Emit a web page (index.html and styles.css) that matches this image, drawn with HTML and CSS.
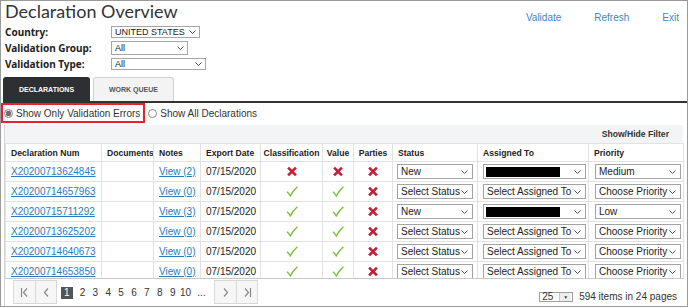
FILE: index.html
```html
<!DOCTYPE html>
<html lang="en">
<head>
  <meta charset="UTF-8" />
  <title>Declaration Overview</title>
  <link rel="stylesheet" href="styles.css">
</head>
<body>
  <svg class="defs" width="0" height="0">
    <symbol id="chev" viewBox="0 0 7 4"><path d="M.5.5 3.5 3.5 6.5.5" fill="none" stroke="#555" stroke-width="1"/></symbol>
    <symbol id="cross" viewBox="0 0 11 11"><path d="M1.6 1.6l7.8 7.8M9.4 1.6l-7.8 7.8" stroke="#c3203a" stroke-width="2.7"/></symbol>
    <symbol id="tick" viewBox="0 0 13 12"><path d="M1 6.2C2.4 7.4 3.6 8.8 4.6 10.8 6.6 7 9 3.8 12.4.8" fill="none" stroke="#78bf3e" stroke-width="1.5"/></symbol>
  </svg>

  <div class="frame">
    <header class="top">
      <h1>Declaration Overview</h1>
      <nav class="actions">
        <a href="#">Validate</a>
        <a href="#">Refresh</a>
        <a href="#">Exit</a>
      </nav>
    </header>

    <div class="filters">
      <label>Country:</label>
      <span class="dd dd-country">UNITED STATES <svg><use href="#chev"/></svg></span>
      <label>Validation Group:</label>
      <span class="dd dd-group">All <svg><use href="#chev"/></svg></span>
      <label>Validation Type:</label>
      <span class="dd dd-type">All <svg><use href="#chev"/></svg></span>
    </div>

    <div class="tabs">
      <div class="tab active">Declarations</div>
      <div class="tab">Work Queue</div>
    </div>

    <div class="modes">
      <label class="mode boxed"><span class="radio checked"></span>Show Only Validation Errors</label>
      <label class="mode"><span class="radio"></span>Show All Declarations</label>
    </div>

    <div class="grid">
      <div class="toolbar">Show/Hide Filter</div>
      <div class="grid-body">
        <table>
          <colgroup>
            <col style="width:96px"><col style="width:52px"><col style="width:47px"><col style="width:60px">
            <col style="width:62px"><col style="width:31px"><col style="width:39px"><col style="width:85px">
            <col style="width:111px"><col style="width:95px">
          </colgroup>
          <thead>
            <tr>
              <th>Declaration Num</th><th>Documents</th><th>Notes</th><th>Export Date</th>
              <th class="c">Classification</th><th class="c">Value</th><th class="c">Parties</th>
              <th>Status</th><th>Assigned To</th><th>Priority</th>
            </tr>
          </thead>
          <tbody>
            <tr>
              <td><a href="#">X20200713624845</a></td><td></td><td><a href="#">View (2)</a></td><td>07/15/2020</td>
              <td class="c"><svg class="ico"><use href="#cross"/></svg></td>
              <td class="c"><svg class="ico"><use href="#cross"/></svg></td>
              <td class="c"><svg class="ico"><use href="#cross"/></svg></td>
              <td><span class="sel sel-status">New <svg><use href="#chev"/></svg></span></td>
              <td><span class="sel sel-assign"><i class="redacted"></i> <svg><use href="#chev"/></svg></span></td>
              <td><span class="sel sel-prio">Medium <svg><use href="#chev"/></svg></span></td>
            </tr>
            <tr>
              <td><a href="#">X20200714657963</a></td><td></td><td><a href="#">View (0)</a></td><td>07/15/2020</td>
              <td class="c"><svg class="ico"><use href="#tick"/></svg></td>
              <td class="c"><svg class="ico"><use href="#tick"/></svg></td>
              <td class="c"><svg class="ico"><use href="#cross"/></svg></td>
              <td><span class="sel sel-status">Select Status <svg><use href="#chev"/></svg></span></td>
              <td><span class="sel sel-assign">Select Assigned To <svg><use href="#chev"/></svg></span></td>
              <td><span class="sel sel-prio">Choose Priority <svg><use href="#chev"/></svg></span></td>
            </tr>
            <tr>
              <td><a href="#">X20200715711292</a></td><td></td><td><a href="#">View (3)</a></td><td>07/15/2020</td>
              <td class="c"><svg class="ico"><use href="#tick"/></svg></td>
              <td class="c"><svg class="ico"><use href="#tick"/></svg></td>
              <td class="c"><svg class="ico"><use href="#cross"/></svg></td>
              <td><span class="sel sel-status">New <svg><use href="#chev"/></svg></span></td>
              <td><span class="sel sel-assign"><i class="redacted"></i> <svg><use href="#chev"/></svg></span></td>
              <td><span class="sel sel-prio">Low <svg><use href="#chev"/></svg></span></td>
            </tr>
            <tr>
              <td><a href="#">X20200713625202</a></td><td></td><td><a href="#">View (0)</a></td><td>07/15/2020</td>
              <td class="c"><svg class="ico"><use href="#tick"/></svg></td>
              <td class="c"><svg class="ico"><use href="#tick"/></svg></td>
              <td class="c"><svg class="ico"><use href="#cross"/></svg></td>
              <td><span class="sel sel-status">Select Status <svg><use href="#chev"/></svg></span></td>
              <td><span class="sel sel-assign">Select Assigned To <svg><use href="#chev"/></svg></span></td>
              <td><span class="sel sel-prio">Choose Priority <svg><use href="#chev"/></svg></span></td>
            </tr>
            <tr>
              <td><a href="#">X20200714640673</a></td><td></td><td><a href="#">View (0)</a></td><td>07/15/2020</td>
              <td class="c"><svg class="ico"><use href="#tick"/></svg></td>
              <td class="c"><svg class="ico"><use href="#tick"/></svg></td>
              <td class="c"><svg class="ico"><use href="#cross"/></svg></td>
              <td><span class="sel sel-status">Select Status <svg><use href="#chev"/></svg></span></td>
              <td><span class="sel sel-assign">Select Assigned To <svg><use href="#chev"/></svg></span></td>
              <td><span class="sel sel-prio">Choose Priority <svg><use href="#chev"/></svg></span></td>
            </tr>
            <tr>
              <td><a href="#">X20200714653850</a></td><td></td><td><a href="#">View (0)</a></td><td>07/15/2020</td>
              <td class="c"><svg class="ico"><use href="#tick"/></svg></td>
              <td class="c"><svg class="ico"><use href="#tick"/></svg></td>
              <td class="c"><svg class="ico"><use href="#cross"/></svg></td>
              <td><span class="sel sel-status">Select Status <svg><use href="#chev"/></svg></span></td>
              <td><span class="sel sel-assign">Select Assigned To <svg><use href="#chev"/></svg></span></td>
              <td><span class="sel sel-prio">Choose Priority <svg><use href="#chev"/></svg></span></td>
            </tr>
          </tbody>
        </table>
      </div>

      <div class="pager">
        <div class="pg-group">
          <span class="pg-btn"><svg width="9" height="9" viewBox="0 0 9 9"><path d="M1.5 0v9M7 .5 3.5 4.5 7 8.5" fill="none" stroke="#888" stroke-width="1.2"/></svg></span>
          <span class="pg-btn"><svg width="9" height="9" viewBox="0 0 9 9"><path d="M6 .5 2.5 4.5 6 8.5" fill="none" stroke="#888" stroke-width="1.2"/></svg></span>
        </div>
        <div class="pages">
          <span class="page current">1</span>
          <span class="page">2</span><span class="page">3</span><span class="page">4</span>
          <span class="page">5</span><span class="page">6</span><span class="page">7</span>
          <span class="page">8</span><span class="page">9</span><span class="page">10</span>
          <span class="page more">...</span>
        </div>
        <div class="pg-group">
          <span class="pg-btn"><svg width="9" height="9" viewBox="0 0 9 9"><path d="M3 .5 6.5 4.5 3 8.5" fill="none" stroke="#888" stroke-width="1.2"/></svg></span>
          <span class="pg-btn"><svg width="9" height="9" viewBox="0 0 9 9"><path d="M2 .5 5.5 4.5 2 8.5M7.5 0v9" fill="none" stroke="#888" stroke-width="1.2"/></svg></span>
        </div>
        <div class="pg-info">
          <span class="size-box">25<span class="size-btn">&#9660;</span></span>
          <span>594 items in 24 pages</span>
        </div>
      </div>
    </div>
  </div>
</body>
</html>
```

FILE: styles.css
```css
:root {
  --text: #333;
  --link: #2c7bbd;
  --line: #e2e2e2;
  --band: #f3f4f5;
}

* {
  box-sizing: border-box;
}

body {
  margin: 0;
  background: #fff;
  font-family: "Liberation Sans", Arial, sans-serif;
  font-size: 10px;
  color: var(--text);
}

.defs {
  position: absolute;
}

.frame {
  width: 688px;
  height: 307px;
  border: 1px solid #9b9b9b;
  overflow: hidden;
}

/* header */
.top {
  display: flex;
  justify-content: space-between;
  align-items: flex-start;
  height: 23px;
  padding-left: 4px;
}

h1 {
  margin: -1px 0 0;
  font: 400 18px/22px Lato, "Open Sans", sans-serif;
  color: #333;
}

.actions {
  display: flex;
  gap: 33px;
  padding: 11px 8px 0 0;
}

.actions a {
  color: #3a89c6;
  text-decoration: none;
  line-height: 12px;
}

/* filters */
.filters {
  display: grid;
  grid-template-columns: 106px auto;
  grid-auto-rows: 16px;
  align-items: center;
  padding-left: 4px;
}

.filters label {
  font: 700 10px "Noto Sans", sans-serif;
  color: #222;
}

.dd {
  justify-self: start;
  display: flex;
  align-items: center;
  justify-content: space-between;
  height: 12px;
  padding: 0 3px;
  border: 1px solid #a6a6a6;
  font-size: 9px;
  color: #222;
}

.dd svg,
.sel svg {
  width: 7px;
  height: 4px;
  flex: none;
}

.dd-country { width: 89px; }
.dd-group { width: 77px; height: 14px; }
.dd-type { width: 95px; }

/* tabs */
.tabs {
  display: flex;
  gap: 3px;
  margin: 5px 0 0 2px;
  border-bottom: 2px solid #333;
}

.tab {
  display: flex;
  align-items: center;
  justify-content: center;
  width: 81px;
  height: 24px;
  background: #f3f3f3;
  border: 1px solid #d2d2d2;
  border-bottom: 0;
  border-radius: 3px 3px 0 0;
  font-size: 7px;
  font-weight: 700;
  text-transform: uppercase;
  color: #555;
}

.tab.active {
  width: 87px;
  background: #2e2f33;
  border-color: #2e2f33;
  color: #fff;
}

/* radio row */
.modes {
  display: flex;
  align-items: center;
  height: 20px;
}

.mode {
  display: flex;
  align-items: center;
  gap: 3px;
  height: 20px;
  margin-left: 3px;
}

.mode.boxed {
  margin-left: 0;
  padding: 0 3px 0 1px;
  border: 2px solid #e3242b;
}

.radio {
  width: 9px;
  height: 9px;
  border: 1px solid #8a8a8a;
  border-radius: 50%;
  background: #fff;
}

.radio.checked {
  background: radial-gradient(circle, #6f6f6f 0 2.6px, #e9e9e9 3px);
}

/* grid */
.grid {
  margin: 2px 0 0 3px;
  width: 680px;
  border-left: 1px solid #d4d4d4;
}

.toolbar {
  display: flex;
  justify-content: flex-end;
  align-items: center;
  height: 18px;
  width: 678px;
  padding-right: 14px;
  background: var(--band);
  font-size: 8.6px;
  font-weight: 700;
}

.grid-body {
  height: 136px;
  overflow: hidden;
  border-bottom: 1px solid #c8c8c8;
}

table {
  width: 678px;
  table-layout: fixed;
  border-collapse: collapse;
}

th,
td {
  padding: 0 4px 0 5px;
  border: 1px solid var(--line);
  text-align: left;
  white-space: nowrap;
  overflow: hidden;
}

th {
  height: 18px;
  font-size: 8.6px;
  font-weight: 700;
  color: #222;
}

td {
  height: 20px;
  color: #222;
}

.c {
  text-align: center;
  padding: 0;
}

td a {
  color: var(--link);
  text-decoration: underline;
}

.ico {
  display: block;
  margin: 0 auto;
  width: 12px;
  height: 11px;
}

.sel {
  display: flex;
  align-items: center;
  justify-content: space-between;
  height: 15px;
  padding: 0 4px 0 3px;
  border: 1px solid #a3a3a3;
  background: #fff;
  color: #222;
}

.sel-status { width: 76px; margin-left: -1px; }
.sel-assign { width: 103px; }
.sel-prio { width: 86px; margin-left: 1px; }

.redacted {
  display: block;
  width: 74px;
  height: 10px;
  margin-left: -1px;
  background: #000;
}

/* pager */
.pager {
  display: flex;
  align-items: flex-start;
  height: 27px;
  padding: 0 7px 0 8px;
}

.pg-group {
  display: flex;
  margin-top: 1px;
  border: 1px solid #d8d8d8;
  background: #f6f6f6;
}

.pg-btn {
  display: flex;
  align-items: center;
  justify-content: center;
  width: 21px;
  height: 22px;
}

.pg-btn + .pg-btn {
  border-left: 1px solid #d8d8d8;
}

.pages {
  display: flex;
  align-items: center;
  margin: 8px 3px 0 4px;
}

.page {
  width: 12.9px;
  height: 12px;
  line-height: 12px;
  text-align: center;
  color: #333;
}

.page.current {
  width: 11.5px;
  margin-right: 3.5px;
  background: #555;
  color: #fff;
}

.page.more {
  width: 19px;
}

.pg-info {
  display: flex;
  align-items: center;
  gap: 6px;
  margin: 13px 0 0 auto;
  line-height: 10px;
}

.size-box {
  display: flex;
  align-items: center;
  justify-content: space-between;
  width: 34px;
  height: 10px;
  padding-left: 2px;
  border: 1px solid #a0a0a0;
}

.size-btn {
  width: 12px;
  height: 8px;
  margin-right: 1px;
  border-left: 1px solid #c8c8c8;
  background: #eee;
  font-size: 5px;
  line-height: 8px;
  text-align: center;
  color: #444;
}
```
